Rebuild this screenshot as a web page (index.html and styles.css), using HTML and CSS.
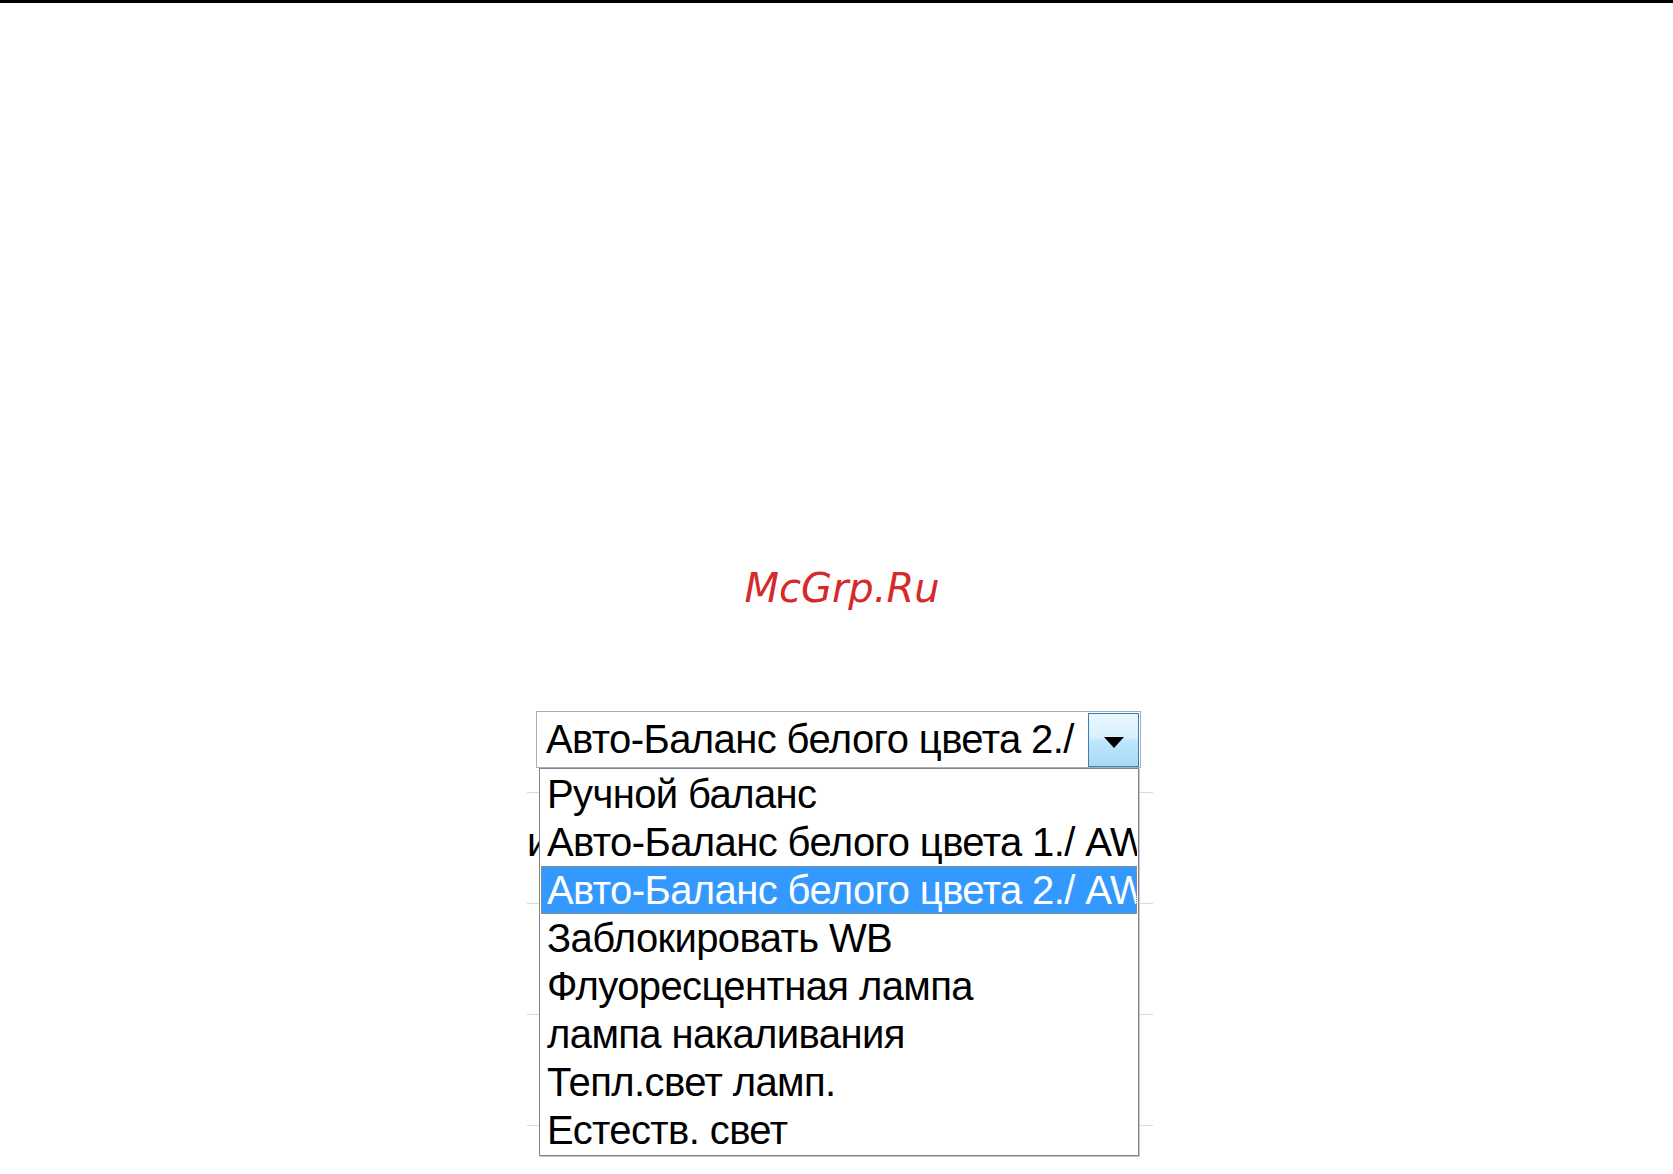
FILE: index.html
```html
<!DOCTYPE html>
<html lang="ru">
<head>
    <meta charset="UTF-8">
    <meta name="viewport" content="width=device-width, initial-scale=1.0">
    <title>Баланс белого</title>
    <link rel="stylesheet" href="styles.css">
</head>
<body>
    <div class="topbar"></div>

    <div class="watermark">McGrp.Ru</div>

    <div class="settings">
        <div class="combo">
            <span class="combo-value">Авто-Баланс белого цвета 2./</span>
            <span class="combo-button">
                <svg width="20" height="11" viewBox="0 0 20 11"><polygon points="0,0 20,0 10,11" fill="#000"/></svg>
            </span>
        </div>

        <div class="rows">
            <div class="row"><span class="row-label">и</span></div>
            <div class="row"></div>
            <div class="row"></div>
            <div class="row"></div>
        </div>

        <ul class="dropdown">
            <li>Ручной баланс</li>
            <li>Авто-Баланс белого цвета 1./ AWB1</li>
            <li class="selected">Авто-Баланс белого цвета 2./ AWB2</li>
            <li>Заблокировать WB</li>
            <li>Флуоресцентная лампа</li>
            <li>лампа накаливания</li>
            <li>Тепл.свет ламп.</li>
            <li>Естеств. свет</li>
        </ul>
    </div>
</body>
</html>
```

FILE: styles.css
```css
        body {
            margin: 0;
            padding: 0;
            background-color: #fff;
            font-family: "Liberation Sans", Arial, sans-serif;
        }

        .topbar {
            height: 3px;
            background-color: #000;
        }

        .watermark {
            margin-top: 565px;
            padding-left: 11px;
            height: 40px;
            line-height: 40px;
            text-align: center;
            font-family: "DejaVu Sans", sans-serif;
            font-style: italic;
            font-size: 40px;
            color: #d62a2a;
        }

        .settings {
            position: relative;
            width: 626px;
            margin: 103px 0 0 527px;
        }

        .combo {
            display: flex;
            width: 603px;
            height: 55px;
            margin-left: 9px;
            border: 1px solid #a9afb8;
            background-color: #fff;
        }
        .combo-value {
            flex: 1;
            padding-left: 9px;
            line-height: 55px;
            font-size: 40px;
            letter-spacing: -0.6px;
            color: #000;
            white-space: nowrap;
            overflow: hidden;
        }
        .combo-button {
            display: flex;
            align-items: center;
            justify-content: center;
            width: 49px;
            margin: 1px 1px 0 0;
            border: 1px solid #3c7fb1;
            background: linear-gradient(#eaf6fd 0%, #d9f0fc 45%, #bee6fd 52%, #a7d9f5 100%);
        }
        .combo-button svg {
            margin-top: 4px;
        }

        .rows {
            padding-top: 24px;
        }
        .row {
            height: 110px;
            border-top: 1px solid #d9d9d9;
        }
        .row:last-child {
            height: 44px;
        }
        .row-label {
            display: block;
            margin-top: 25px;
            line-height: 48px;
            font-size: 40px;
            color: #000;
        }

        .dropdown {
            position: absolute;
            top: 57px;
            left: 12px;
            width: 596px;
            margin: 0;
            padding: 1px;
            list-style: none;
            border: 1px solid #82828e;
            background-color: #fff;
            box-shadow: 1px 1px 0 #c9c9d2;
        }
        .dropdown li {
            height: 48px;
            line-height: 48px;
            padding-left: 6px;
            font-size: 40px;
            letter-spacing: -0.6px;
            color: #000;
            white-space: nowrap;
            overflow: hidden;
        }
        .dropdown li.selected {
            background-color: #3399ff;
            color: #fff;
            outline: 1px dotted #c98a3c;
            outline-offset: -1px;
        }
```
